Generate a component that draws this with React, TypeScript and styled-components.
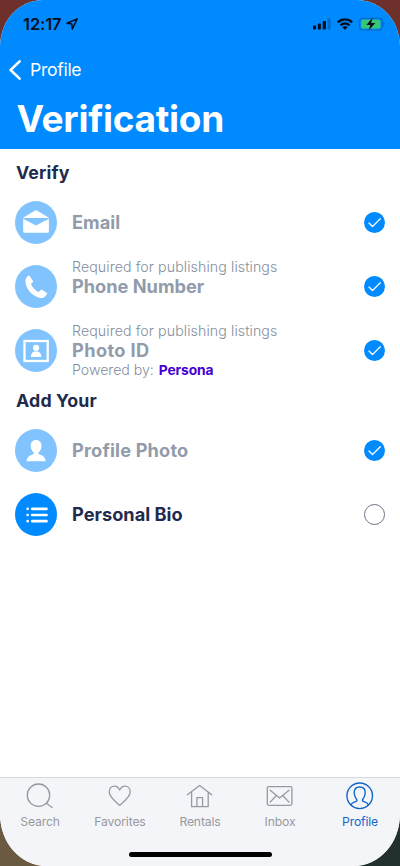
import React from 'react';
import styled, { createGlobalStyle } from 'styled-components';

const GlobalStyle = createGlobalStyle`
  *, *::before, *::after { box-sizing: border-box; }
  body { margin: 0; font-family: Inter, "Liberation Sans", sans-serif; font-feature-settings: "calt" 0; }
  svg { display: block; flex: none; }
`;

const Backdrop = styled.div`
  height: 866px;
  width: 400px;
  background:
    linear-gradient(90deg, #6b5a42 50%, #22302e 50%) bottom / 100% 50% no-repeat,
    #6d302a;
`;

const Screen = styled.div`
  display: flex;
  flex-direction: column;
  height: 100%;
  overflow: hidden;
  border-radius: 43px 43px 46px 46px / 46px 46px 52px 52px;
  background: #fff;
`;

const Header = styled.header`
  flex: none;
  height: 149px;
  background: #008aff;
  color: #fff;
`;

const StatusBar = styled.div`
  display: flex;
  align-items: center;
  justify-content: space-between;
  height: 48px;
  padding: 0 15px 0 23px;
  color: #050f20;
`;

const StatusGroup = styled.div<{ $gap: number }>`
  display: flex;
  align-items: center;
  gap: ${p => p.$gap}px;
`;

const Time = styled.span`
  font-size: 16.5px;
  font-weight: 600;
  line-height: 20px;
  letter-spacing: -0.1px;
`;

const BackLink = styled.div`
  display: flex;
  align-items: center;
  gap: 8px;
  height: 44px;
  padding-left: 9px;
  font-size: 17.6px;
  line-height: 20px;
  letter-spacing: -0.3px;
`;

const Title = styled.h1`
  margin: 0;
  padding-left: 16.5px;
  font-size: 37px;
  font-weight: 700;
  line-height: 54px;
  letter-spacing: -0.28px;
`;

const Content = styled.main`
  flex: 1;
  padding-top: 5px;
`;

const SectionTitle = styled.h2`
  margin: 0;
  padding: 1px 0 0 16px;
  height: 36px;
  font-size: 17.8px;
  font-weight: 700;
  line-height: 36px;
  letter-spacing: 0.15px;
  color: #1f2b4c;
`;

const Row = styled.div`
  display: flex;
  align-items: center;
  height: 64px;
  padding: 0 15px;
`;

const RowIcon = styled.div<{ $done: boolean }>`
  display: grid;
  place-items: center;
  width: 42px;
  height: 43px;
  margin-top: 1px;
  border-radius: 50%;
  background: ${p => (p.$done ? '#80c3ff' : '#008aff')};
`;

const RowText = styled.div`
  flex: 1;
  display: grid;
  grid-template-rows: 19px 20px 19px;
  padding-left: 15px;
`;

const Caption = styled.div<{ $spacing: number }>`
  font-size: 14.2px;
  font-weight: 300;
  line-height: 19px;
  letter-spacing: ${p => p.$spacing}px;
  color: #858e9d;
  white-space: pre;
`;

const Label = styled.div<{ $done: boolean; $spacing: number }>`
  font-size: 18.2px;
  font-weight: 700;
  line-height: 20px;
  letter-spacing: ${p => p.$spacing}px;
  color: ${p => (p.$done ? '#929baa' : '#1f2b4c')};
`;

const Brand = styled.span`
  margin-left: 5px;
  font-size: 13.8px;
  font-weight: 700;
  letter-spacing: -0.1px;
  color: #4600d1;
`;

const Check = styled.div<{ $done: boolean }>`
  display: grid;
  place-items: center;
  width: 21px;
  height: 21px;
  margin-top: 1px;
  border-radius: 50%;
  border: ${p => (p.$done ? 'none' : '1px solid #6c7180')};
  background: ${p => (p.$done ? '#008aff' : '#fff')};
`;

const TabBar = styled.nav`
  flex: none;
  display: grid;
  grid-template-columns: repeat(5, 1fr);
  height: 75px;
  padding-top: 3px;
  border-top: 1px solid #d6d8dc;
  background: #f4f5f9;
`;

const Tab = styled.div<{ $active?: boolean }>`
  display: flex;
  flex-direction: column;
  align-items: center;
  color: ${p => (p.$active ? '#1268c7' : '#97999e')};
  font-size: 12.2px;
  line-height: 22px;
  letter-spacing: -0.15px;
`;

const TabIcon = styled.div`
  display: grid;
  place-items: center;
  height: 30px;
`;

const HomeArea = styled.div`
  flex: none;
  height: 14px;
  background: #f4f5f9;
`;

const HomeIndicator = styled.div`
  width: 143px;
  height: 5px;
  margin: 0 auto;
  border-radius: 3px;
  background: #000;
`;

const LocationIcon = () => (
  <svg width="12" height="12" viewBox="0 0 12 12">
    <path d="M11.2.9.9 5.2l4.9.9.5 5z" fill="none" stroke="currentColor" strokeWidth="1.5" strokeLinejoin="round" />
  </svg>
);

const SignalIcon = () => (
  <svg width="18" height="12" viewBox="0 0 18 12" fill="currentColor">
    <rect x="0" y="7.500" width="3" height="4" rx=".8" />
    <rect x="4.800" y="5.600" width="3.100" height="5.900" rx=".8" />
    <rect x="9.700" y="3" width="3.200" height="8.500" rx=".8" />
    <rect x="14.600" y=".5" width="3.100" height="11" rx=".8" opacity=".25" />
  </svg>
);

const WifiIcon = () => (
  <svg width="16" height="12" viewBox="0 0 16 12" fill="none" stroke="currentColor" strokeWidth="2.300">
    <path d="M.9 4.300a10.200 10.200 0 0 1 14.200 0" />
    <path d="M3.500 7.300a6.500 6.500 0 0 1 9 0" />
    <path d="m8 12-2.600-2.700a3.800 3.800 0 0 1 5.200 0z" fill="currentColor" stroke="none" />
  </svg>
);

const BatteryIcon = () => (
  <svg width="26" height="14" viewBox="0 0 26 14">
    <rect x=".6" y="1.200" width="22.400" height="11.800" rx="3" fill="none" stroke="#0a66b8" strokeWidth="1.100" />
    <rect x="2.200" y="2.700" width="19.200" height="8.800" rx="1.600" fill="#35c775" />
    <path d="M24.200 5.200v3.700c.8-.3 1.300-1 1.300-1.800s-.5-1.600-1.300-1.900z" fill="#0a66b8" />
    <path d="M13.600.4 7.400 7.900h4L9.600 13.600l6.700-7.500h-4.100z" fill="#04101c" />
  </svg>
);

const BackIcon = () => (
  <svg width="13" height="20" viewBox="0 0 13 20">
    <path d="m10.600 1.400-9 8.600 9 8.600" fill="none" stroke="#fff" strokeWidth="2.600" strokeLinecap="round" strokeLinejoin="round" />
  </svg>
);

const MailIcon = () => (
  <svg width="42" height="42" viewBox="0 0 42 42" fill="#fff">
    <path d="M8.400 15.400 20.900 8l12.700 7.400v.5H8.400z" />
    <path d="M8.200 16.800 20.900 23.600l13-6.800v12.600a1.300 1.300 0 0 1-1.300 1.300H9.500a1.300 1.300 0 0 1-1.300-1.300z" />
  </svg>
);

const PhoneIcon = () => (
  <svg width="42" height="42" viewBox="0 0 42 42">
    <path d="M13.200 9.800c.8-.5 1.500-.1 1.900.6l2.700 4.300c.4.700.3 1.400-.3 1.900l-1.100 1c-.4.4-.4.9-.1 1.400 1.500 2.800 3.800 5.200 6.700 6.800.5.3 1 .2 1.300-.2l1-1.300c.5-.6 1.200-.7 1.900-.3l4.100 2.500c.7.400.9 1.200.4 1.900-1.300 2.300-3.500 4.100-6.400 3.600-7.300-1.400-13.500-8.100-14.700-14.800-.6-3.100.2-5.600 2.600-7.400z" fill="#fff" />
  </svg>
);

const PhotoIdIcon = () => (
  <svg width="42" height="42" viewBox="0 0 42 42">
    <rect x="9.500" y="11" width="23.200" height="20" fill="none" stroke="#fff" strokeWidth="2.300" />
    <circle cx="21.100" cy="17.800" r="3.100" fill="#fff" />
    <path d="M15.900 26.900c0-3.200 1.500-5.100 3.700-5.500h3c2.200.4 3.700 2.300 3.700 5.500z" fill="#fff" />
  </svg>
);

const PersonIcon = () => (
  <svg width="42" height="42" viewBox="0 0 42 42" fill="#fff">
    <path d="M21.100 10c3.600 0 5.400 2.400 5.400 5.700 0 3.100-1.200 5.500-2.900 6.600v1.100c0 .6.500.9 1.300 1.200 3.500 1 5.700 3.200 5.700 6.700H11.600c0-3.500 2.200-5.700 5.700-6.700.8-.3 1.300-.6 1.300-1.200v-1.100c-1.700-1.100-2.900-3.500-2.900-6.600 0-3.300 1.800-5.700 5.400-5.700z" />
  </svg>
);

const ListIcon = () => (
  <svg width="42" height="42" viewBox="0 0 42 42" stroke="#fff" strokeWidth="2.700" strokeLinecap="round">
    <path d="M17.200 14.800h14.300M17.200 21h14.300M17.200 27.200h14.300M12.600 14.800h.1M12.600 21h.1M12.600 27.200h.1" />
  </svg>
);

const CheckIcon = () => (
  <svg width="21" height="21" viewBox="0 0 21 21">
    <path d="m5 11 3.500 3.500 7.800-7.700" fill="none" stroke="#fff" strokeWidth="1.300" strokeLinecap="round" strokeLinejoin="round" />
  </svg>
);

const tabStroke = { fill: 'none', stroke: 'currentColor', strokeWidth: 1.3, strokeLinecap: 'round', strokeLinejoin: 'round' } as const;

const SearchTabIcon = () => (
  <svg width="28" height="28" viewBox="0 0 28 28" {...tabStroke}>
    <circle cx="12.500" cy="13.200" r="11.200" />
    <path d="m20.400 21.200 5.700 4.400" />
  </svg>
);

const HeartTabIcon = () => (
  <svg width="28" height="28" viewBox="0 0 28 28" {...tabStroke}>
    <path d="M13.700 23.400C10.400 20.600 3.200 15 3.200 9.800c0-3.500 2.300-5.700 5.200-5.700 2.600 0 4.200 1.500 5.300 3.900 1.100-2.400 2.800-3.900 5.300-3.900 2.900 0 5.200 2.200 5.200 5.700 0 5.200-7.200 10.800-10.500 13.600z" />
  </svg>
);

const HomeTabIcon = () => (
  <svg width="28" height="28" viewBox="0 0 28 28" {...tabStroke}>
    <path d="M1.300 12.800 13.700 3.400l12 9.400M5.600 10.200v14.500h16.600V10.200M10.900 24.700v-9h5.700v9" />
  </svg>
);

const InboxTabIcon = () => (
  <svg width="28" height="28" viewBox="0 0 28 28" {...tabStroke}>
    <rect x="1.300" y="4.600" width="24.600" height="18.700" rx="1.500" />
    <path d="m4.200 8.300 9.400 7.600 9.400-7.600M4.200 20.100l6.200-6.600M23 20.100l-6.200-6.600" />
  </svg>
);

const ProfileTabIcon = () => (
  <svg width="28" height="28" viewBox="0 0 28 28" {...tabStroke} strokeWidth={1.4}>
    <circle cx="13.700" cy="13.800" r="12.800" />
    <path d="M5 23.100c.4-1.500 1.500-2.300 3-2.900 1.600-.6 3-.9 3-1.800 0-1-2.800-3.400-2.800-7.700 0-3.500 2.200-5.700 5.500-5.700s5.500 2.200 5.500 5.700c0 4.300-2.800 6.700-2.800 7.700 0 .9 1.400 1.200 3 1.800 1.500.6 2.600 1.400 3 2.900" />
  </svg>
);

type Item = {
  icon: React.ReactNode;
  label: string;
  done: boolean;
  spacing: number;
  note?: string;
  brand?: string;
};

const verifyItems: Item[] = [
  { icon: <MailIcon />, label: 'Email', done: true, spacing: 0 },
  { icon: <PhoneIcon />, label: 'Phone Number', done: true, spacing: 0 },
  { icon: <PhotoIdIcon />, label: 'Photo ID', done: true, spacing: 0.4, brand: 'Persona' },
].map((item, index) => (index > 0 ? { ...item, note: 'Required for publishing listings' } : item));

const profileItems: Item[] = [
  { icon: <PersonIcon />, label: 'Profile Photo', done: true, spacing: 0.17 },
  { icon: <ListIcon />, label: 'Personal Bio', done: false, spacing: 0.02 },
];

const tabs = [
  { label: 'Search', icon: <SearchTabIcon /> },
  { label: 'Favorites', icon: <HeartTabIcon /> },
  { label: 'Rentals', icon: <HomeTabIcon /> },
  { label: 'Inbox', icon: <InboxTabIcon /> },
  { label: 'Profile', icon: <ProfileTabIcon />, active: true },
];

const ChecklistRow = ({ icon, label, done, spacing, note, brand }: Item) => (
  <Row>
    <RowIcon $done={done}>{icon}</RowIcon>
    <RowText>
      <Caption $spacing={0.09}>{note}</Caption>
      <Label $done={done} $spacing={spacing}>{label}</Label>
      <Caption $spacing={-0.05}>{brand && <>Powered by:<Brand>{brand}</Brand></>}</Caption>
    </RowText>
    <Check $done={done}>{done && <CheckIcon />}</Check>
  </Row>
);

export default function App() {
  return (
    <>
      <GlobalStyle />
      <Backdrop>
        <Screen>
          <Header>
            <StatusBar>
              <StatusGroup $gap={4}>
                <Time>12:17</Time>
                <LocationIcon />
              </StatusGroup>
              <StatusGroup $gap={6}>
                <SignalIcon />
                <WifiIcon />
                <BatteryIcon />
              </StatusGroup>
            </StatusBar>
            <BackLink>
              <BackIcon />
              Profile
            </BackLink>
            <Title>Verification</Title>
          </Header>
          <Content>
            <SectionTitle>Verify</SectionTitle>
            {verifyItems.map(item => <ChecklistRow key={item.label} {...item} />)}
            <SectionTitle>Add Your</SectionTitle>
            {profileItems.map(item => <ChecklistRow key={item.label} {...item} />)}
          </Content>
          <TabBar>
            {tabs.map(tab => (
              <Tab key={tab.label} $active={tab.active}>
                <TabIcon>{tab.icon}</TabIcon>
                {tab.label}
              </Tab>
            ))}
          </TabBar>
          <HomeArea><HomeIndicator /></HomeArea>
        </Screen>
      </Backdrop>
    </>
  );
}
